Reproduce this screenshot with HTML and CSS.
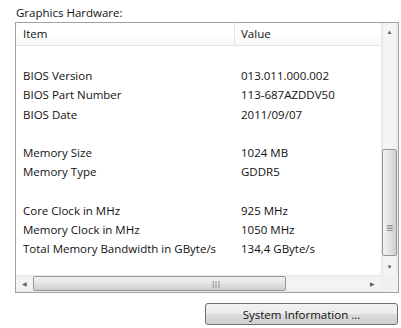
FILE: index.html
```html
<!DOCTYPE html>
<html lang="en">
<head>
    <meta charset="UTF-8">
    <title>Graphics Hardware</title>
    <link rel="stylesheet" href="styles.css">
</head>
<body>
    <div class="group-label">Graphics Hardware:</div>
    <div class="listbox">
        <div class="view">
            <div class="list">
                <div class="head">
                    <div class="col item">Item</div>
                    <div class="col value">Value</div>
                </div>
                <div class="row"></div>
                <div class="row"><span class="item">BIOS Version</span><span class="value">013.011.000.002</span></div>
                <div class="row"><span class="item">BIOS Part Number</span><span class="value">113-687AZDDV50</span></div>
                <div class="row"><span class="item">BIOS Date</span><span class="value">2011/09/07</span></div>
                <div class="row"></div>
                <div class="row"><span class="item">Memory Size</span><span class="value">1024 MB</span></div>
                <div class="row"><span class="item">Memory Type</span><span class="value">GDDR5</span></div>
                <div class="row"></div>
                <div class="row"><span class="item">Core Clock in MHz</span><span class="value">925 MHz</span></div>
                <div class="row"><span class="item">Memory Clock in MHz</span><span class="value">1050 MHz</span></div>
                <div class="row"><span class="item">Total Memory Bandwidth in GByte/s</span><span class="value">134,4 GByte/s</span></div>
            </div>
            <div class="vscroll">
                <div class="arrow up">&#9650;</div>
                <div class="track">
                    <div class="thumb v"><span class="grip">&#8801;</span></div>
                </div>
                <div class="arrow down">&#9660;</div>
            </div>
        </div>
        <div class="hbar">
            <div class="hscroll">
                <div class="arrow left">&#9664;</div>
                <div class="track">
                    <div class="thumb h"><span class="grip">|||</span></div>
                </div>
                <div class="arrow right">&#9654;</div>
            </div>
            <div class="corner"></div>
        </div>
    </div>
    <div class="actions">
        <button class="btn">System Information ...</button>
    </div>
</body>
</html>
```
FILE: styles.css
```css
body { margin: 0; background: #fff; font-family: "Open Sans", "Noto Sans", sans-serif; font-size: 11.5px; color: #111; width: 401px; height: 328px; overflow: hidden; }
.group-label { padding: 5px 0 0 16px; height: 22px; box-sizing: border-box; line-height: 16px; }
.listbox { margin-left: 15px; width: 384px; height: 271px; border: 1px solid #a0a0a0; box-sizing: border-box; display: flex; flex-direction: column; }
.view { flex: 1; display: flex; min-height: 0; }
.list { flex: 1; overflow: hidden; }
.head { display: flex; height: 22px; background: linear-gradient(#fff, #fff 50%, #f6f7f8); border-bottom: 1px solid #e3e5e8; }
.head .col { line-height: 22px; }
.head .item { width: 211px; padding-left: 7px; border-right: 1px solid #e3e5e8; }
.head .value { padding-left: 6px; }
.row { display: flex; height: 19.2px; line-height: 19px; padding-left: 7px; }
.row:nth-child(2) { margin-top: 1px; }
.row .item { width: 218px; }
.vscroll { width: 17px; display: flex; flex-direction: column; background: linear-gradient(90deg, #e6e6e6, #f4f4f4 20%, #f4f4f4 80%, #e9e9e9); }
.hscroll { flex: 1; display: flex; background: linear-gradient(#e6e6e6, #f4f4f4 20%, #f4f4f4 80%, #e9e9e9); }
.arrow { width: 17px; height: 17px; font-size: 6px; color: #606060; display: flex; align-items: center; justify-content: center; }
.track { flex: 1; position: relative; }
.vscroll .track { padding: 109px 0 0 0; }
.thumb { border: 1px solid #979797; border-radius: 2px; box-sizing: border-box; display: flex; align-items: center; justify-content: center; color: #7c7c7c; }
.thumb.v { height: 107px; margin: 0 1px; background: linear-gradient(90deg, #f2f2f2, #e4e4e4 50%, #cfcfcf); padding-top: 50px; }
.thumb.v .grip { font-size: 12px; line-height: 10px; }
.hscroll .track { display: flex; padding: 1px 0; }
.thumb.h { width: 253px; background: linear-gradient(#f2f2f2, #e4e4e4 50%, #cfcfcf); font-size: 7px; letter-spacing: -1px; font-weight: bold; padding-left: 112px; }
.hbar { display: flex; height: 17px; }
.corner { width: 17px; background: #f0f0f0; }
.actions { display: flex; justify-content: flex-end; padding: 10px 3px 0 0; }
.btn { width: 193px; height: 22px; font-family: inherit; font-size: 11.5px; color: #111; border: 1px solid #707070; border-radius: 3px; background: linear-gradient(#f2f2f2, #ebebeb 50%, #dddddd 51%, #cfcfcf); padding: 0; }
```
